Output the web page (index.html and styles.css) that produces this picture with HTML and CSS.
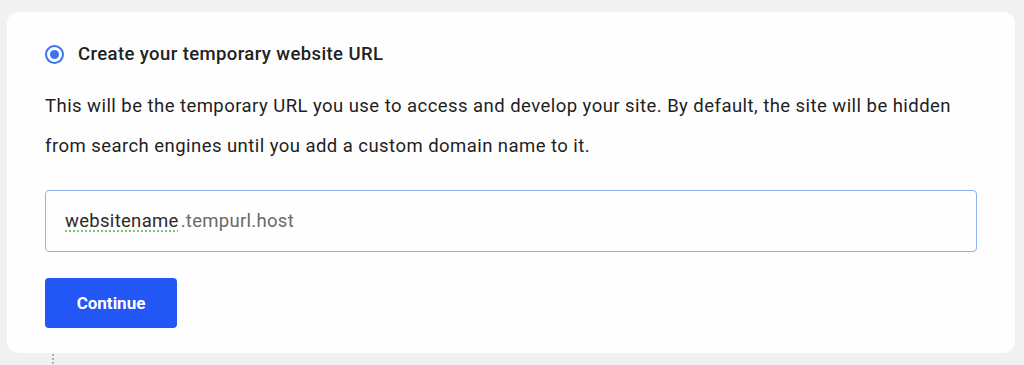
FILE: index.html
```html
<!DOCTYPE html>
<html>
<head>
<meta charset="utf-8">
<link rel="stylesheet" href="styles.css">
</head>
<body>
<div class="card">
  <label class="radio-row">
    <span class="radio"><span class="radio-dot"></span></span>
    <span class="radio-label">Create your temporary website URL</span>
  </label>
  <p class="desc">This will be the temporary URL you use to access and develop your site. By default, the site will be hidden from search engines until you add a custom domain name to it.</p>
  <div class="url-field">
    <span class="url-name">websitename</span><span class="url-suffix">.tempurl.host</span>
  </div>
  <button class="btn">Continue</button>
</div>
<div class="handle"><span></span><span></span><span></span><span></span></div>
</body>
</html>
```

FILE: styles.css
```css
* { box-sizing: border-box; }
html, body { margin: 0; padding: 0; }
body {
  background: #f1f1f1;
  font-family: Roboto, "Liberation Sans", sans-serif;
  color: #222;
  padding-top: 12px;
  height: 365px;
  overflow: hidden;
}
.card {
  margin-left: 7px;
  width: 1008px;
  height: 341px;
  background: #fefefe;
  border-radius: 12px;
  padding: 32px 38px 25px 38px;
}
.radio-row {
  display: flex;
  align-items: center;
  height: 20px;
  gap: 14px;
}
.radio {
  width: 19px;
  height: 19px;
  border-radius: 50%;
  border: 2px solid #3d73ea;
  display: flex;
  align-items: center;
  justify-content: center;
}
.radio-dot {
  width: 9px;
  height: 9px;
  border-radius: 50%;
  background: #3d73ea;
}
.radio-label {
  font-size: 18.5px;
  font-weight: 500;
  letter-spacing: 0.4px;
  color: #222;
}
.desc {
  margin: 22px 0 0 0;
  font-size: 18.5px;
  letter-spacing: 0.45px;
  line-height: 40px;
  color: #1e1e1e;
}
.url-field {
  margin-top: 24px;
  height: 62px;
  border: 1px solid #8fb0f5;
  border-radius: 4px;
  display: flex;
  align-items: center;
  padding-left: 19px;
  font-size: 18.5px;
  letter-spacing: 0.3px;
}
.url-name {
  color: #2a2a2a;
  text-decoration: underline dotted #6cc36c;
  text-underline-offset: 4px;
}
.url-suffix {
  color: #6a6a6a;
  margin-left: 2px;
}
.btn {
  display: block;
  margin-top: 26px;
  width: 132px;
  height: 50px;
  border: none;
  border-radius: 4px;
  background: #2256f5;
  color: #fff;
  font-family: Roboto, "Liberation Sans", sans-serif;
  font-size: 17px;
  font-weight: 700;
  padding: 0;
}
.handle {
  margin-left: 52px;
  display: flex;
  flex-direction: column;
  gap: 2px;
  padding-top: 1px;
}
.handle span {
  width: 2px;
  height: 2px;
  background: #999;
  border-radius: 50%;
}
```
